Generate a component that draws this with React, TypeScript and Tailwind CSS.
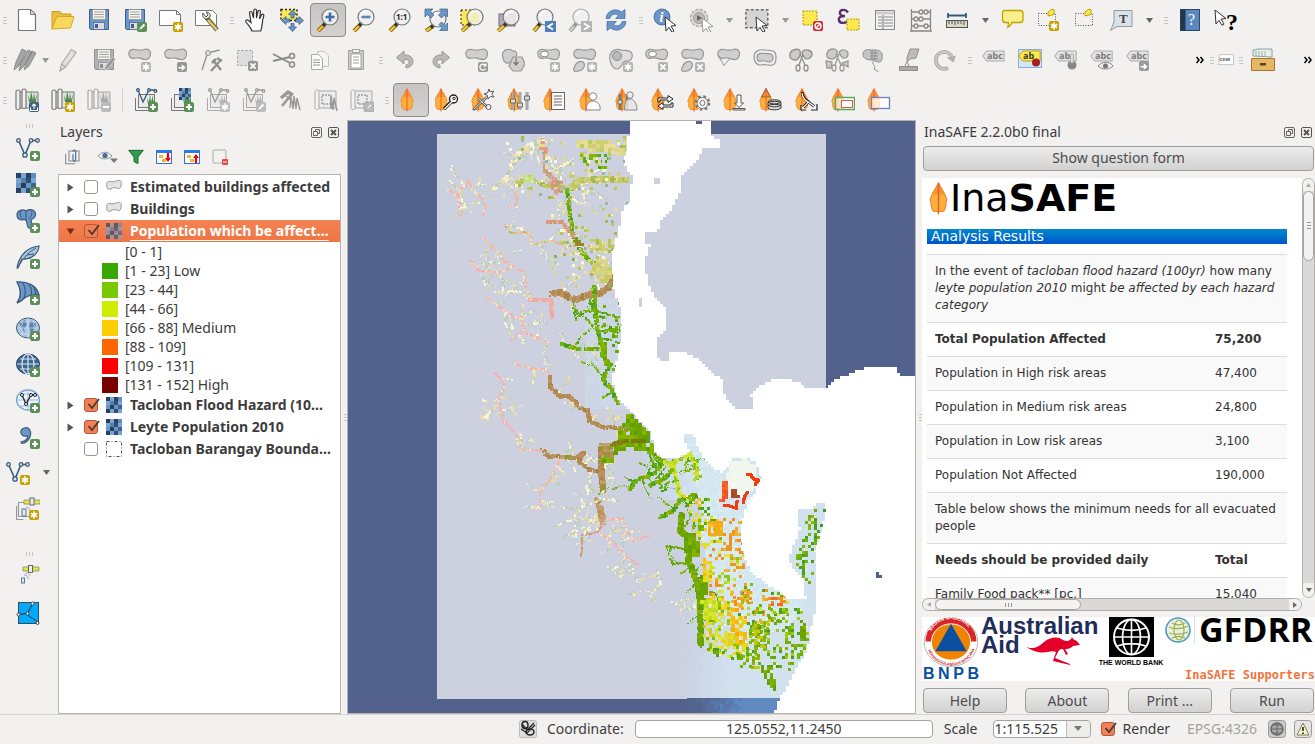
import React from "react";

/* ------------------------------------------------------------------ */
/* Icon building blocks (24 x 24 grid)                                 */
/* ------------------------------------------------------------------ */

type Node = React.ReactNode;

function Svg({ children, size = 24 }: { children: Node; size?: number }) {
  return (
    <svg viewBox="0 0 24 24" width={size} height={size} fill="none" aria-hidden="true" className="block shrink-0">
      {children}
    </svg>
  );
}

const GREEN = "#5a9058";
const GOLD = "#c4a000";
const GREY = "#b2b2b2";
const BLUE = "#6b96c8";
const NAVY = "#3d5a78";

function Badge({ kind, color, x = 14, y = 14 }: { kind: string; color: string; x?: number; y?: number }) {
  return (
    <g transform={`translate(${x} ${y})`}>
      <rect x="0" y="0" width="10" height="10" rx="2" fill={color} />
      {kind === "plus" && <path d="M5 2v6M2 5h6" stroke="#fff" strokeWidth="2.2" />}
      {kind === "minus" && <path d="M2 5h6" stroke="#fff" strokeWidth="2" />}
      {kind === "x" && <path d="M2.4 2.4l5.2 5.2M7.6 2.4L2.4 7.6" stroke="#fff" strokeWidth="1.8" />}
      {kind === "star" && <path d="M5 1.3v7.4M1.8 3.2l6.4 3.6M1.8 6.8l6.4-3.6" stroke="#fff" strokeWidth="1.6" />}
      {kind === "pen" && <path d="M2.2 7.8l1-2.4 3.6-3.6 1.4 1.4-3.6 3.6z" fill="#fff" />}
      {kind === "arrow" && <path d="M1.5 5h3.2V2.2L8.6 5.6 4.7 9V6.6H1.5z" fill="#fff" />}
      {kind === "up" && <path d="M5 7V2M3 4l2-2 2 2M1.5 5.5v3h7v-3" stroke="#fff" strokeWidth="1.1" />}
      {kind === "rot" && <path d="M7.6 6.5A3 3 0 1 1 7.4 3.4M7.8 1.6v2.3H5.4" stroke="#fff" strokeWidth="1.3" />}
      {kind === "no" && (
        <g>
          <circle cx="5" cy="5" r="3" stroke="#fff" strokeWidth="1.4" />
          <path d="M3 7l4-4" stroke="#fff" strokeWidth="1.4" />
        </g>
      )}
    </g>
  );
}

function Floppy({ fill = BLUE, edge = "#3c5f8e", paper = "#f5f5f3" }: { fill?: string; edge?: string; paper?: string }) {
  return (
    <g>
      <path d="M2.5 1.5h19v20h-18l-1-1z" fill={fill} stroke={edge} />
      <rect x="5.5" y="1.5" width="13" height="10" rx="1" fill={paper} stroke="#8a8a8a" strokeWidth=".7" />
      <path d="M7 4h10M7 6.5h10M7 9h10" stroke="#a09f90" />
      <rect x="6.5" y="14.5" width="11" height="7" fill="#dcdcdc" stroke={edge} strokeWidth=".7" />
      <rect x="8" y="16" width="3" height="4" fill={edge} />
    </g>
  );
}

function Lens({ muted = false, cx = 14, cy = 9 }: { muted?: boolean; cx?: number; cy?: number }) {
  return (
    <g>
      <path d={`M2 23L${cx - 5} ${cy + 7}`} stroke={muted ? "#999" : "#7b5b10"} strokeWidth="4" />
      <path d={`M2 23L${cx - 5} ${cy + 7}`} stroke={muted ? "#ccc" : "#f5c62c"} strokeWidth="2.4" />
      <path d={`M${cx - 7} ${cy + 9}l3-4`} stroke={muted ? "#999" : "#333"} strokeWidth="3" />
      <circle cx={cx} cy={cy} r="8" fill="#eef0ee" fillOpacity=".85" stroke={muted ? "#aaa" : "#777"} strokeWidth="1.2" />
      <path d={`M${cx - 5} ${cy - 1}a5.5 5.5 0 0 1 5-4.5`} stroke="#fff" strokeWidth="1.5" />
    </g>
  );
}

function Blob({ d = "M.8 6C.5 2 4 .8 7 1.500s6 1 9 0 6.500 0 6.500 4-2 6.500-5.500 6-5.500-2.500-9-1.500S1 10 .8 6z", fill = "#cfcfcf", edge = "#979797" }) {
  return <path d={d} fill={fill} stroke={edge} strokeWidth="1.2" />;
}

function Nodes({ edge = NAVY }: { edge?: string }) {
  return (
    <g stroke={edge} strokeWidth="1.3" fill="#dfe8f2">
      <path d="M2.5 3.5L9 18M9 18L15 3.5h6" fill="none" strokeWidth="1.6" />
      <circle cx="2.5" cy="3.5" r="1.8" />
      <circle cx="15" cy="3.5" r="1.8" />
      <circle cx="21.5" cy="3.5" r="1.8" />
      <circle cx="9" cy="18" r="2.2" />
    </g>
  );
}

const CHECKER = ["#24415f", "#7ba4d1", "#24415f", "#5f8dc0", "#7ba4d1", "#5580b0", "#30507a", "#7ba4d1", "#6a96c6", "#24415f", "#6a96c6", "#3d6391", "#24415f", "#7ba4d1", "#30507a", "#7ba4d1"];

function Checker({ x = 0, y = 0, s = 5 }: { x?: number; y?: number; s?: number }) {
  return (
    <g shapeRendering="crispEdges">
      {CHECKER.map((f, i) => (
        <rect key={i} x={x + (i % 4) * s} y={y + Math.floor(i / 4) * s} width={s} height={s} fill={f} />
      ))}
    </g>
  );
}

function GrassMap({ muted = false }: { muted?: boolean }) {
  const g = muted ? "#a5a5a5" : "#4c8a4a";
  return (
    <g>
      <path d="M5 4h18v16H5" fill="#e4e4e4" stroke={muted ? "#aaa" : "#777"} />
      <path d="M1 3.5c0-2 4-2 4 0V20c0 2-4 2-4 0zM7 2.5c0-2 4-2 4 0V19c0 2-4 2-4 0z" fill="#f2f2f2" stroke={muted ? "#aaa" : "#777"} strokeWidth="1.2" />
      <path d="M14 14l-1-7 2 5 1-9 2 9 1-8 1 8 2-6-1 8z" fill={g} />
    </g>
  );
}

function LayerFrame({ muted = false }: { muted?: boolean }) {
  const c = muted ? "#aaa" : "#777";
  return (
    <g>
      <path d="M1.5 10v12.5H15" stroke={c} />
      <rect x="4.5" y="6.5" width="16" height="13" fill="#ececec" stroke={c} />
      <path d="M14 16l-1-6 2 4 1-8 1 8 2-7v7l2-5-1 7z" fill={muted ? "#aaa" : "#4c8a4a"} />
    </g>
  );
}

function VLine({ muted = false }: { muted?: boolean }) {
  const c = muted ? "#999" : "#355a7c";
  return (
    <g stroke={c} strokeWidth="1.3" fill="#e8eef4">
      <path d="M4 2l5 12 6-12h6" fill="none" />
      <circle cx="4" cy="2" r="1.3" />
      <circle cx="15" cy="2" r="1.3" />
      <circle cx="21.5" cy="3" r="1.3" />
    </g>
  );
}

function Leaf({ x = 0 }: { x?: number }) {
  return (
    <g transform={`translate(${x} 0)`}>
      <path d="M7 .5C5.5 4 1.500 9 .8 13c.6 1.5 1 2 .6 3.5C2 20 2.500 21 4 21.5h6c1.5-.5 2-1.5 2.600-5-.4-1.5 0-2 .6-3.5C12.500 9 8.5 4 7 .5z" fill="#fbaf3c" stroke="#f0842c" strokeWidth=".8" />
      <path d="M7 .5C6 3 4 6 2.500 9h9C10 6 8 3 7 .5z" fill="#f58233" opacity=".6" />
      <path d="M7 1v22.5" stroke="#ee5b22" strokeWidth="1" />
    </g>
  );
}

function Cursor({ x = 12, y = 8, edge = "#333" }: { x?: number; y?: number; edge?: string }) {
  return <path transform={`translate(${x} ${y})`} d="M0 0l11 8.5-5 .6 3 5-2 1.2-3-5L1 14z" fill="#fff" stroke={edge} />;
}

const label = (t: string, x: number, y: number, size: number, fill: string) => (
  <text x={x} y={y} fontSize={size} fontWeight="700" fill={fill} fontFamily='"Open Sans", sans-serif'>
    {t}
  </text>
);

function Tag({ t, fill = "#e2e2e2", edge = "#aaa", ink = "#777" }: { t: string; fill?: string; edge?: string; ink?: string }) {
  return (
    <g>
      <path d="M.8 8L4.5 3h17.7v10H4.5z" fill={fill} stroke={edge} />
      {label(t, 5, 11, 9, ink)}
    </g>
  );
}

const I: Record<string, Node> = {
  newDoc: (
    <g>
      <path d="M3.5 1.5h12l5 5v16h-17z" fill="#fff" stroke="#777" strokeWidth="1.2" />
      <path d="M15.5 1.5v5h5z" fill="#ddd" stroke="#777" />
    </g>
  ),
  open: (
    <g>
      <path d="M1 21V3.5h8l2 2.5h9v3" fill="#e8bd3c" stroke="#c99c1b" />
      <path d="M1 21L6 8.5h17L19.5 20z" fill="#fbd85c" stroke="#d0a92c" />
    </g>
  ),
  save: <Floppy />,
  saveAs: (
    <g>
      <Floppy />
      <Badge kind="pen" color={GREEN} />
    </g>
  ),
  composer: (
    <g>
      <path d="M.5 2.5h17l4 4v11H.5z" fill="#fff" stroke="#777" />
      <path d="M17.5 2.5v4h4" stroke="#777" />
      <Badge kind="star" color={GOLD} />
    </g>
  ),
  composerMgr: (
    <g>
      <path d="M.5 2.5h17l4 4v11H.5z" fill="#fff" stroke="#777" />
      <path d="M11 9l11 13" stroke="#6b6330" strokeWidth="4.5" />
      <path d="M13 12l9 10" stroke="#dcc87c" strokeWidth="2.6" />
      <path d="M8 5c-1 3 0 6 4 6l3-2c1-3-1-5-4-5l2 3-2 2z" fill="#e8e8e8" stroke="#555" />
    </g>
  ),
  hand: (
    <path
      d="M8 23c-1-4-4-6-6-9-1-1.500 1-3 2.500-1.500l2.500 2L5.500 5c0-2 2.200-2 2.700 0L9.500 10 9.800 2.500c0-2 2.600-2 2.700 0V10l1.500-6.500c.5-1.600 2.600-1.200 2.500.5L15.500 11l2-4c1-1.500 2.700-.5 2.200 1-2 6-1 10-3 15z"
      fill="#fff"
      stroke="#333"
      strokeWidth="1.2"
    />
  ),
  panSel: (
    <g>
      <rect x="1" y="1.500" width="16" height="11" fill="#fce94f" stroke="#222" strokeWidth="1.500" strokeDasharray="2 2" />
      <path d="M12.500 2l4 4.500h-2.500V10h-3V6.500H8.500zM12.500 23.500l-4-4.500H11v-3.500h3V19h2.500zM1.500 12.500L6 8.500V11h3.500v3H6v2.500zM23.500 12.500L19 8.500V11h-3.500v3H19v2.500z" fill={BLUE} stroke="#3a5f8c" strokeWidth=".8" />
    </g>
  ),
  zoomIn: (
    <g>
      <Lens />
      <path d="M14 4.500v9M9.500 9h9" stroke="#3f6da5" strokeWidth="2.600" />
    </g>
  ),
  zoomOut: (
    <g>
      <Lens />
      <path d="M9.500 9h9" stroke="#5c87bd" strokeWidth="2.600" />
    </g>
  ),
  zoom11: (
    <g>
      <Lens />
      {label("1:1", 8, 12, 8, "#222")}
    </g>
  ),
  zoomFull: (
    <g>
      <Lens cx={14} cy={11} />
      <path d="M1 1h8L6.500 3.500 10 7 7 10 3.500 6.500 1 9zM23.500 1h-8L18 3.500 14.500 7l3 3L21 6.500 23.500 9zM23.500 22.500h-8L18 20l-3-3.500 2.500-2.500 3.500 3.500 2.500-2.500z" fill={BLUE} stroke="#3a5f8c" strokeWidth=".7" />
    </g>
  ),
  zoomSel: (
    <g>
      <rect x="1" y="2" width="14" height="15" fill="#fce94f" stroke="#222" strokeDasharray="2 2" />
      <Lens cx={15} />
      <path d="M10 5h9v9h-9z" fill="#f4efaa" opacity=".8" />
    </g>
  ),
  zoomLayer: (
    <g>
      <rect x="3" y="6" width="16" height="12" fill="#b9a9c0" stroke="#77667f" />
      <Lens cx={15} />
    </g>
  ),
  zoomLast: (
    <g>
      <Lens cx={13} />
      <rect x="13" y="13" width="11" height="11" fill="#4e80b8" />
      <path d="M21 15.500l-5 3 5 3" stroke="#fff" strokeWidth="1.800" />
    </g>
  ),
  zoomNext: (
    <g>
      <Lens cx={13} muted />
      <rect x="13" y="13" width="11" height="11" fill="#b5b5b5" />
      <path d="M16 15.500l5 3-5 3" stroke="#fff" strokeWidth="1.800" />
    </g>
  ),
  refresh: (
    <g fill={BLUE} stroke="#42699b" strokeWidth=".7">
      <path d="M2 10.500C2.500 3 11-1 17.500 4L21 1.500v9h-9.500l3-3C11 5 6.500 6.500 6 10.500z" />
      <path d="M22 13.500c-.5 7.500-9 11.500-15.500 6.500L3 22.500v-9h9.500l-3 3c3.500 2.500 8 1 8.500-3z" />
    </g>
  ),
  info: (
    <g>
      <circle cx="9" cy="9" r="8" fill={BLUE} stroke="#49719f" />
      <text x="6.500" y="14" fontSize="14" fontWeight="700" fontStyle="italic" fill="#fff" fontFamily='"Liberation Serif", serif'>i</text>
      <Cursor x={12} y={9} />
    </g>
  ),
  action: (
    <g>
      <circle cx="10" cy="10" r="8.500" fill="#ddd" stroke="#aaa" strokeWidth="1.500" strokeDasharray="3 1.500" />
      <circle cx="10" cy="10" r="5.500" fill="#bbb" stroke="#999" />
      <path d="M8 7l5 3-5 3z" fill="#666" />
      <Cursor x={13} y={10} edge="#999" />
    </g>
  ),
  select: (
    <g>
      <rect x=".8" y="1.800" width="22" height="18" fill="#d4d4d4" stroke="#666" strokeWidth="1.400" strokeDasharray="3 2" />
      <Cursor x={11} y={9} />
    </g>
  ),
  deselect: (
    <g>
      <rect x="2" y="3" width="14" height="14" fill="#fce94f" stroke="#b39b00" strokeDasharray="2 1" />
      <Badge kind="no" color="#d8262c" x={12} y={13} />
    </g>
  ),
  expr: (
    <g>
      <path d="M11 4.500C8 0 2 2 3 5.500 3.500 8 6 8 8 8 4 8 1 9 2 12.500c1.200 3.500 8 3 9.500-.5" stroke="#5c2d74" strokeWidth="2.400" />
      <rect x="10" y="11" width="12" height="11" fill="#fce94f" stroke="#c4a000" strokeDasharray="2 1" />
    </g>
  ),
  attr: (
    <g stroke="#888">
      <rect x="2.500" y="2.500" width="19" height="19" fill="#f4f4f4" />
      <path d="M3 5h18" strokeWidth="3" stroke="#ccc" />
      <path d="M5 9h4M11 9h9M5 12h4M11 12h9M5 15h4M11 15h9M5 18h4M11 18h9M10 7v14" strokeWidth="1.200" />
    </g>
  ),
  abacus: (
    <g stroke="#888" strokeWidth="1.300">
      <path d="M2.500 1v22M21.500 1v22M1 23h22M3 4h18M3 11h18M3 18h18" />
      <g fill="#eee"><circle cx="12" cy="4" r="2" /><circle cx="17" cy="4" r="2" /><circle cx="7" cy="11" r="2" /><circle cx="12" cy="11" r="2" /><circle cx="7" cy="18" r="2" /><circle cx="17" cy="18" r="2" /></g>
    </g>
  ),
  ruler: (
    <g>
      <path d="M3 7.500h18M3 5v5M21 5v5" stroke="#2f5c78" strokeWidth="1.800" />
      <rect x="1.500" y="12.500" width="21" height="7" fill="#d9d9c8" stroke="#555" />
      <path d="M4 13v3M7 13v3M10 13v4M13 13v3M16 13v3M19 13v4" stroke="#555" />
    </g>
  ),
  tip: <path d="M4 2.500h15c2 0 3 1 3 3v6c0 2-1 3-3 3h-8c-1 3-2 4-4.500 5 1-2 1-3 .8-5H4c-2 0-2.500-1-2.500-3v-6c0-2 .5-3 2.500-3z" fill="#f9f08c" stroke="#c4a000" strokeWidth="1.300" />,
  bmNew: (
    <g>
      <rect x="1.500" y="5.500" width="17" height="12" stroke="#555" strokeDasharray="1 1.500" />
      <path d="M11 8V4l3-2.500h3v5z" fill="#fce94f" stroke="#c4a000" />
      <Badge kind="star" color={GOLD} x={12} y={13} />
    </g>
  ),
  bm: (
    <g>
      <rect x="2.500" y="5.500" width="17" height="12" stroke="#555" strokeDasharray="1 1.500" />
      <path d="M12 8V4l3-2.500h3v5z" fill="#fce94f" stroke="#c4a000" />
    </g>
  ),
  textAnn: (
    <g>
      <path d="M5 2.500h18v16H8l-6.500 4L5 14z" fill="#d8e2ec" stroke="#999" />
      <text x="10" y="15" fontSize="13" fontWeight="700" fill="#444" fontFamily='"Liberation Serif", serif'>T</text>
    </g>
  ),
  help: (
    <g>
      <rect x="2.500" y="1.500" width="19" height="21" fill="#5b87bd" stroke="#27496b" />
      <rect x="2.500" y="1.500" width="5" height="21" fill="#22374f" />
      <text x="10" y="17" fontSize="16" fill="#fff" fontFamily='"Liberation Serif", serif'>?</text>
    </g>
  ),
  whats: (
    <g>
      <Cursor x={1} y={2} />
      <text x="12" y="22" fontSize="24" fontWeight="700" fill="#000" fontFamily='"Liberation Serif", serif'>?</text>
    </g>
  ),
  pencils: (
    <g fill="#a5a5a5" stroke="#7d7d7d" strokeWidth=".8">
      <path d="M1 22l2-8L9 1l4 2-7 15zM6 23l2-8 7-13 4 2-8 14zM11 22l2-7 6-12 4 2-7 13z" />
    </g>
  ),
  pencil: <path d="M4 23l1.500-7L15.500 1.500l4.500 3L9.500 19zM5.500 16l4 3" fill="#e2e2e2" stroke="#aaa" strokeWidth="1.200" />,
  saveEdits: (
    <g>
      <Floppy fill="#b2b2b2" edge="#8f8f8f" />
      <path d="M12 23l1.500-5 7-9 3 2-7 9z" fill="#999" stroke="#ddd" strokeWidth=".7" />
    </g>
  ),
  addFeat: (<g><Blob /><Badge kind="star" color={GREY} x={13} /></g>),
  moveFeat: (<g><Blob /><Badge kind="arrow" color="#979797" x={13} /></g>),
  nodeTool: (
    <g stroke="#8f8f8f">
      <path d="M2 22L7.500 5l12-3" strokeWidth="1.300" />
      <circle cx="8" cy="5" r="2.500" fill="#ddd" />
      <path d="M11 23l9-10M13 12l8 10" strokeWidth="2.200" />
      <path d="M17 10l5 3M12 15l4-4" strokeWidth="2.600" />
    </g>
  ),
  delSel: (
    <g>
      <rect x="1.500" y="2.500" width="15" height="15" fill="#ddd" stroke="#999" strokeDasharray="2 2" />
      <Badge kind="x" color="#949494" x={12} y={13} />
    </g>
  ),
  cut: (
    <g stroke="#8c8c8c" strokeWidth="1.800">
      <path d="M1 6l17 9M1 13l17-4" />
      <circle cx="20" cy="8" r="2.500" strokeWidth="1.600" />
      <circle cx="20" cy="16.500" r="2.500" strokeWidth="1.600" />
    </g>
  ),
  copy: (
    <g stroke="#c4c4c4">
      <path d="M9.500 3.500h7l4 4v11h-11z" fill="#f5f5f5" />
      <path d="M3.500 6.500h7l4 4v11h-11z" fill="#fafafa" stroke="#aaa" />
      <path d="M5 12h7M5 14.500h7M5 17h7" stroke="#999" />
    </g>
  ),
  paste: (
    <g stroke="#a2a2a2">
      <rect x="4.500" y="2.500" width="15" height="19" fill="#ccc" />
      <rect x="7" y="6" width="10" height="14" fill="#fff" />
      <path d="M9 9h6M9 12h6M9 15h6" />
      <rect x="8.500" y="1.500" width="7" height="3" fill="#eee" />
    </g>
  ),
  undo: <path d="M3.500 9.500L11 3v4c10-1 13 11 2 13v-3c5-1.500 4-6-2-5.500V16z" fill="#b9b9b9" stroke="#969696" />,
  redo: <path d="M20.500 9.500L13 3v4C3 6 0 18 11 20v-3c-5-1.500-4-6 2-5.500V16z" fill="#b9b9b9" stroke="#969696" />,
  rotate: (<g><Blob /><Badge kind="rot" color="#999" x={13} /></g>),
  simplify: (
    <g fill="#cfcfcf" stroke="#979797" strokeWidth="1.200">
      <path d="M1.500 7c0-6 8-7 10-4 3-1 5 2 4 5s-4 6-8 7-6-4-6-8z" />
      <path d="M12 9h9l3 7-4 7h-8l-4-5z" />
      <path d="M15 10v6M12.500 14l2.500 3 2.500-3" fill="none" stroke="#777" />
    </g>
  ),
  ringAdd: (<g><Blob /><ellipse cx="7.500" cy="6" rx="4" ry="2.800" fill="#fff" stroke="#888" /><Badge kind="star" color={GREY} x={13} /></g>),
  partAdd: (<g><Blob /><Blob d="M1 20c1-5 6-8 9-6s1 8-4 9-6 0-5-3z" /><Badge kind="star" color={GREY} x={14} /></g>),
  fillRing: (<g><Blob d="M1 7c2-6 8-6 11-5s10-1 11 4-2 8-7 7c-3 0-3 8-8 8S0 13 1 7z" fill="#dedede" /><circle cx="8" cy="8" r="4.500" fill="#bbb" stroke="#888" /><Badge kind="star" color={GREY} x={14} /></g>),
  ringDel: (<g><Blob /><ellipse cx="7.500" cy="6" rx="4" ry="2.800" fill="#fff" stroke="#888" /><Badge kind="x" color={GREY} x={13} /></g>),
  partDel: (<g><Blob /><Blob d="M1 20c1-5 6-8 9-6s1 8-4 9-6 0-5-3z" /><Badge kind="x" color={GREY} x={14} /></g>),
  reshape: (<g><path d="M2 9l5 8.500 6-7" fill="#eee" stroke="#979797" /><Blob /></g>),
  offset: (<g><Blob d="M1 9c0-6 5-8 11-7s11-1 11 7-3 9-8 8-6 0-8 0-6-2-6-8z" fill="#eee" /><Blob d="M4 9c0-4 4-4 8-3.500s8-.5 8 4-3 5-6 4-4-1-6-.5-4 0-4-4z" /></g>),
  split: (
    <g stroke="#8f8f8f" strokeWidth="1.300">
      <path d="M1 6c1-5 9-6 10-3s-1 9-5 9-6-3-5-6zM14 3c3-2 9-1 9 3s-5 6-7 4-4-5-2-7z" fill="#ccc" />
      <path d="M14 6l-4 11M11 6l5 11" />
      <ellipse cx="9" cy="20" rx="2" ry="3" /><ellipse cx="17" cy="20" rx="2" ry="3" />
    </g>
  ),
  splitParts: (
    <g stroke="#9a9a9a" strokeWidth="1.300">
      <path d="M2 5c2-5 9-5 10-2s-1 8-5 8-6-2-5-6zM15 3c3-2 8-1 8 3s-4 5-6 3-4-4-2-6zM1 13l6 1-1 6H2zM17 15l6-2v6z" fill="#ccc" />
      <path d="M14 6l-4 11M11 6l5 11" />
      <ellipse cx="9" cy="20" rx="2" ry="3" /><ellipse cx="17" cy="20" rx="2" ry="3" />
    </g>
  ),
  merge: (
    <g stroke="#8f8f8f">
      <path d="M2 5c2-5 7-3 9-3s9-1 10 4-1 9-4 8-4-2-6-2-10 0-9-7z" fill="#c4c4c4" />
      <path d="M11 2v10M14 2v10M9 5h8M9 8h8M9 11h8" />
      <path d="M13 13c-4 3 3 4 0 8 2 2 4 1 4 3" />
    </g>
  ),
  glue: (
    <g stroke="#8f8f8f">
      <path d="M13 1h9l-3 9-6 1-3 3 0-4z" fill="#bbb" />
      <path d="M10 14l2 3-2 2-2-2z" fill="#eee" />
      <path d="M2.500 18.500h18v4h-18z" fill="#aaa" />
    </g>
  ),
  rotPoint: (
    <g>
      <path d="M15 20C8 23 2.500 18 3 11S13 1 19 8" stroke="#a4a4a4" strokeWidth="3.600" />
      <path d="M15 20C8 23 2.500 18 3 11S13 1 19 8" stroke="#cacaca" strokeWidth="1.800" />
      <path d="M13.500 9.500l9.500-2-2.500 7z" fill="#b0b0b0" />
    </g>
  ),
  lab: <Tag t="abc" />,
  labPin: (
    <g>
      <rect x=".5" y="1.500" width="23" height="18" fill="#d5e5f8" stroke="#86aede" />
      <Tag t="ab" fill="#fce94f" edge="#c4a000" ink="#333" />
      <circle cx="18" cy="14.500" r="4" fill="#a61f24" />
    </g>
  ),
  labHold: (<g><Tag t="ab" /><circle cx="18" cy="17" r="4.500" fill="#888" /><rect x="16.500" y="6" width="3" height="9" rx="1" fill="#ddd" stroke="#999" strokeWidth=".7" /></g>),
  labShow: (<g><Tag t="abc" /><path d="M8 18c4-5 12-5 15 0-4 4-11 4-15 0z" fill="#eee" stroke="#888" /><circle cx="15.500" cy="18" r="2.500" fill="#777" /></g>),
  labMove: (<g><Tag t="abc" /><Badge kind="arrow" color="#999" x={13} y={13} /></g>),
  csw: (<g><path d="M4 5.500h17v12l-4 0H2.500l1-2z" fill="#fff" stroke="#bbb" />{label("csw", 4, 13, 7, "#666")}</g>),
  archive: (
    <g>
      <path d="M2 8V2h3l1-1h15v8z" fill="#e9efe9" stroke="#8aa0a0" />
      <path d="M5 3v6M8 3v6M11 3v6M14 3v6" stroke="#9bb5b5" />
      <path d="M.5 10.500h23v12H.5z" fill="#e6b865" stroke="#a5772b" />
      <rect x="9" y="15" width="6" height="2.500" fill="#5b4218" />
    </g>
  ),
  g1: (<g><GrassMap /><Badge kind="up" color="#3e617f" /></g>),
  g2: (<g><GrassMap /><Badge kind="star" color={GOLD} /></g>),
  g3: (<g><GrassMap muted /><Badge kind="minus" color="#bbb" /></g>),
  g4: (<g><LayerFrame /><VLine /><Badge kind="plus" color={GREEN} /></g>),
  g5: (<g><LayerFrame /><Checker x={9} y={0} s={3} /><path d="M14 15l2-9 1 8 2-7v7l2-5-1 7z" fill="#4c8a4a" /><Badge kind="plus" color={GREEN} /></g>),
  g6: (<g><LayerFrame muted /><VLine muted /><Badge kind="star" color="#bbb" /></g>),
  g7: (<g><LayerFrame muted /><VLine muted /><Badge kind="pen" color="#bbb" /></g>),
  g8: (
    <g stroke="#999">
      <path d="M4 18L13 7" strokeWidth="2.600" />
      <path d="M3 10l7-6 5 3" strokeWidth="3.400" />
      <path d="M12 20l1-11 2 12 1-13 2 13 1-11 3 12M8 8l7 6" strokeWidth="1.400" />
    </g>
  ),
  g9: (<g stroke="#aaa"><path d="M3 3h19v17H5z" fill="#ececec" /><path d="M1 3.500c0-2 4-2 4 0V20c0 2-4 2-4 0z" fill="#f2f2f2" /><rect x="8" y="7" width="9" height="9" strokeDasharray="2 1" stroke="#777" /><path d="M17 21l0-13 2 14 1-12 3 13" stroke="#999" strokeWidth="1.500" /></g>),
  g10: (<g stroke="#aaa"><path d="M3 3h19v17H5z" fill="#ececec" /><path d="M1 3.500c0-2 4-2 4 0V20c0 2-4 2-4 0z" fill="#f2f2f2" /><rect x="8" y="7" width="9" height="9" strokeDasharray="2 1" stroke="#777" /><Badge kind="pen" color="#bbb" /></g>),
  i0: <Leaf x={1} />,
  i1: (<g><Leaf x={-1} /><path d="M9 21l8-8" stroke="#222" strokeWidth="3.400" /><circle cx="18.500" cy="11" r="4" fill="#fff" stroke="#222" strokeWidth="1.400" /><path d="M9.500 21l8-8" stroke="#fff" strokeWidth="1.200" /><circle cx="19" cy="10.500" r="1.200" stroke="#222" /></g>),
  i2: (<g><Leaf x={0} /><path d="M18 1l1 3 3.500-1-1.500 3.500 2 2.500-3.500-.5L17 11l-.5-3.500L13 6l3.500-1z" fill="#fff" stroke="#555" /><path d="M2 22L16 9M7 10l9 9" stroke="#666" strokeWidth="2.600" /><path d="M3 21L16 9M7 10l9 9" stroke="#ddd" /><circle cx="17.500" cy="19" r="2.500" fill="#fff" stroke="#555" /></g>),
  i3: (<g><Leaf x={0} /><path d="M6 4v18M13 4v18M20 4v18" stroke="#666" strokeWidth="2.600" /><path d="M6 4v18M13 4v18M20 4v18" stroke="#eee" /><path d="M3.500 11h5v4h-5zM10.500 15h5v4h-5zM17.500 8h5v4h-5z" fill="#ddd" stroke="#666" /></g>),
  i4: (<g><Leaf x={0} /><rect x="8.500" y="4.500" width="13" height="17" fill="#fff" fillOpacity=".85" stroke="#666" /><path d="M11 8h8M11 11h8M11 14h8M11 17h8" stroke="#666" strokeWidth="1.200" /></g>),
  i5: (<g><Leaf x={0} /><circle cx="14" cy="8.500" r="3.700" fill="#fff" stroke="#888" /><path d="M7.500 22c-1-6 3-9 6.500-9s8 3 7 9z" fill="#fff" fillOpacity=".92" stroke="#888" /></g>),
  i6: (<g><Leaf x={0} /><path d="M5 6v16M12 6v16" stroke="#777" strokeWidth="2.500" /><path d="M3 12h4v4H3z" fill="#ddd" stroke="#666" /><circle cx="15" cy="7" r="3.200" fill="#eee" stroke="#888" /><path d="M9.500 22c0-9 2-11 5.500-11s7 4 7 11z" fill="#e5e5e5" fillOpacity=".85" stroke="#888" /></g>),
  i7: (<g><Leaf x={0} /><path d="M7 14v-4h10V7.500L22 11l-5 3.500V12H9v2zM22 15v4H12v2.500L7 18l5-3.500V17h8v-2z" fill="#fff" stroke="#222" /></g>),
  i8: (<g><Leaf x={0} /><circle cx="15.500" cy="15" r="6.500" fill="#f4f4f4" stroke="#777" strokeWidth="2.600" strokeDasharray="2.600 2.500" /><circle cx="15.500" cy="15" r="5.500" fill="#f4f4f4" stroke="#777" /><circle cx="15.500" cy="15" r="2.500" stroke="#777" fill="#fff" /></g>),
  i9: (<g><Leaf x={0} /><path d="M14 7h4v8h2.500L16 19.500 11.500 15H14zM10 20.500h12v1.500H10z" fill="#fff" stroke="#555" /></g>),
  i10: (<g fill="#ddd" stroke="#333"><Leaf x={0} /><path d="M9 20c3 2.500 10 2.500 13 0v-2.500c-3-1.500-10-1.500-13 0zM9 17c3 2.500 10 2.500 13 0v-2.500c-3-1.500-10-1.500-13 0zM9 14c3 2.500 10 2.500 13 0-1-3-12-3-13 0z" /></g>),
  i11: (<g><Leaf x={0} /><path d="M7 4c1 8 6 9 13 15M13 12c0 4-3 6-6 8" stroke="#222" strokeWidth="2.800" /><path d="M7 5c1 8 6 8 13 14M13 13c0 3-3 5-6 7" stroke="#fff" strokeWidth="1.200" /><path d="M22 16v6h-6M6 17v5h5" stroke="#222" fill="#fff" strokeWidth="1.200" /></g>),
  i12: (<g><Leaf x={0} /><rect x="4.500" y="9.500" width="19" height="12" fill="#fff" fillOpacity=".7" stroke="#5aa85a" strokeWidth="1.500" /><rect x="10.500" y="12.500" width="11" height="7" fill="#fff" stroke="#e05a4a" /></g>),
  i13: (<g><Leaf x={0} /><rect x="4.500" y="9.500" width="18" height="11" fill="#fff" fillOpacity=".75" stroke="#6f7fd0" strokeWidth="1.300" /></g>),
  vNodes: (<g><Nodes /><Badge kind="plus" color={GREEN} x={14} y={14} /></g>),
  vRaster: (<g><Checker /><Badge kind="plus" color={GREEN} x={14} y={14} /></g>),
  vPg: (<g><path d="M1 6c0-5 6-6 9-4 4-3 10-1 9.500 4-.5 3-2 4-4.500 4.500l1 6.500c-1 3-4 3-4.500 0L10.500 12 9 10.500C3 12 1 9 1 6z" fill={BLUE} stroke={NAVY} strokeWidth="1.200" /><path d="M5 2c-2 4 0 8 3 8.500M10 2v9M15.500 2.500c1 3-1 6-3 7.500" stroke={NAVY} /><Badge kind="plus" color={GREEN} x={14} y={14} /></g>),
  vLite: (<g><path d="M1 23C3 10 12 2 23 1c0 4-3 11-13 13L6 14 2 23z" fill="#a9c3e2" stroke={NAVY} strokeWidth="1.200" /><path d="M2 22C8 12 14 6 20 3M8 14l7-1M11 10l7-1" stroke={NAVY} /><Badge kind="plus" color={GREEN} x={14} y={14} /></g>),
  vSpatial: (<g><path d="M1 1c9-1 20 3 22 13-5-1-12 0-18 6l-4 2C6 15 5 8 1 1z" fill={BLUE} stroke={NAVY} strokeWidth="1.400" /><path d="M7 2c3 6 3 10 1 15M13 4c3 4 3 8 2 11M18 7c2 3 2 5 2 7" stroke={NAVY} strokeWidth="1.200" /><Badge kind="plus" color={GREEN} x={14} y={14} /></g>),
  vWms: (<g><ellipse cx="12" cy="11" rx="11.500" ry="10" fill="#a9c4e4" stroke={NAVY} /><path d="M3 6l6-3 2 4-3 5 1 4-3-4zM14 4l6 2-1 6-3 5-3-6z" fill="#5f83ad" /><path d="M1 11h22M12 1v20M4 5h16M4 17h16M6 3v16M18 3v16" stroke="#d5e3f3" strokeWidth=".7" /><Badge kind="plus" color={GREEN} x={14} y={14} /></g>),
  vWcs: (<g><ellipse cx="12" cy="11" rx="11.500" ry="10" fill="#3c6590" stroke="#24415f" /><path d="M4 6h16M1 11h22M4 16h16M12 1v20" stroke="#dde8f5" strokeWidth="1.200" /><ellipse cx="12" cy="11" rx="6" ry="10" stroke="#dde8f5" strokeWidth="1.200" /><Badge kind="plus" color={GREEN} x={14} y={14} /></g>),
  vWfs: (<g><ellipse cx="12" cy="11" rx="11.500" ry="10" fill="#eef4fb" stroke="#7ba4d1" strokeWidth="1.400" /><path d="M1 11h22M12 1v20M3 5h18M3 17h18" stroke="#9bbbe0" /><path d="M6 6l4 9 5-9h4" stroke="#222" strokeWidth="1.300" /><g fill="#fff" stroke="#222"><circle cx="6" cy="6" r="1.500" /><circle cx="10" cy="15" r="1.500" /><circle cx="15" cy="6" r="1.500" /><circle cx="19" cy="6" r="1.500" /></g><Badge kind="plus" color={GREEN} x={14} y={14} /></g>),
  vComma: (<g><path d="M5 17c5-1.500 7-4 6.500-6C8 12 4 9.500 5 6s7-5 9-.5S13 17 6 18.500z" fill={BLUE} stroke={NAVY} strokeWidth="1.200" /><Badge kind="plus" color={GREEN} x={14} y={14} /></g>),
  vNew: (<g><Nodes /><Badge kind="star" color={GOLD} x={14} y={14} /></g>),
  vGps: (<g><path d="M.5 9v13.500h7M2.500 5.500h6M2.500 5.500v14h11" stroke="#999" strokeWidth="1.200" /><path d="M8 3h16v4H8z" fill="#e6e62a" stroke="#999" /><rect x="14" y="1" width="4" height="7" fill="#eee" stroke="#666" /><rect x="6" y="12" width="4" height="7" fill="#dfe8ee" stroke="#557d99" /><path d="M10 10c3 0 4 2 4 4" stroke="#aaa" /><Badge kind="star" color={GOLD} x={13} y={13} /></g>),
  vSat: (<g><path d="M7 4h16v4H7z" fill="#e6e62a" stroke="#999" /><rect x="12.500" y="2.500" width="4" height="7" fill="#eee" stroke="#666" /><rect x="5.500" y="15" width="3" height="5" fill="#dfe8ee" stroke="#557d99" /><path d="M8 12c3 0 4 1 4 4M9 10c4 0 5 2 5 3" stroke="#aaa" /></g>),
  vTopo: (<g><rect x="2.500" y="1.500" width="20" height="21" fill="#00aaff" stroke="#3b4a55" /><path d="M2.500 13.500l9-1 5-10M11.500 12.500c2 5 8 5 10 9" stroke="#222" /><g fill="#fff" stroke="#444"><circle cx="2.500" cy="13.500" r="1.500" /><circle cx="11.500" cy="12.500" r="1.500" /><circle cx="16.500" cy="2.500" r="1.500" /><circle cx="21.500" cy="22" r="1.500" /></g></g>),
};

/* ------------------------------------------------------------------ */
/* Toolbars                                                            */
/* ------------------------------------------------------------------ */

function Tool({ name, pressed = false, narrow = false }: { name: string; pressed?: boolean; narrow?: boolean }) {
  return (
    <button
      type="button"
      aria-label={name}
      aria-pressed={pressed}
      className={
        "flex h-[34px] shrink-0 items-center justify-center rounded-sm " +
        (narrow ? "w-8 " : "w-9 ") +
        (pressed ? "border border-[#8b8b8b] bg-gradient-to-b from-[#c6c5c4] to-[#d3d2d1]" : "")
      }
    >
      <Svg>{I[name]}</Svg>
    </button>
  );
}

function Grip({ wide = false }: { wide?: boolean }) {
  return (
    <div className={"flex shrink-0 flex-col items-center gap-[2px] " + (wide ? "w-[13px]" : "w-[9px]")}>
      <i className="h-px w-1 bg-[#c4c3c1]" />
      <i className="h-px w-1 bg-[#c4c3c1]" />
      <i className="h-px w-1 bg-[#c4c3c1]" />
    </div>
  );
}

function VGrip() {
  return (
    <div className="flex justify-center gap-[2px]">
      <i className="h-1 w-px bg-[#c4c3c1]" />
      <i className="h-1 w-px bg-[#c4c3c1]" />
      <i className="h-1 w-px bg-[#c4c3c1]" />
    </div>
  );
}

function Drop({ narrow = false, dark = false }: { narrow?: boolean; dark?: boolean }) {
  return (
    <button type="button" aria-label="Options" className={"flex h-8 shrink-0 items-center justify-center " + (narrow ? "w-[9px]" : "w-5")}>
      <svg width="7" height="5" viewBox="0 0 7 5" aria-hidden="true">
        <path d="M0 0h7L3.500 5z" fill={dark ? "#666" : "#999"} />
      </svg>
    </button>
  );
}

function More() {
  return (
    <button type="button" className="flex w-[14px] shrink-0 items-center justify-center" aria-label="More tools">
      <svg width="8" height="8" viewBox="0 0 8 8" fill="none" aria-hidden="true">
        <path d="M.5 1L3 4 .5 7M4.500 1L7 4 4.500 7" stroke="#000" strokeWidth="1.500" />
      </svg>
    </button>
  );
}

const tools = (names: string[]) => names.map((n) => <Tool key={n} name={n} />);

function Toolbars() {
  return (
    <header className="shrink-0">
      <div className="flex h-10 items-center">
        <Grip />
        {tools(["newDoc", "open", "save", "saveAs", "composer", "composerMgr"])}
        <Grip wide />
        {tools(["hand", "panSel"])}
        <Tool name="zoomIn" pressed />
        {tools(["zoomOut", "zoom11", "zoomFull", "zoomSel", "zoomLayer", "zoomLast", "zoomNext", "refresh"])}
        <Grip wide />
        {tools(["info", "action"])}
        <Drop />
        <Tool name="select" />
        <Drop />
        {tools(["deselect", "expr", "attr", "abacus", "ruler"])}
        <Drop dark />
        {tools(["tip", "bmNew", "bm", "textAnn"])}
        <Drop dark />
        <Grip wide />
        {tools(["help", "whats"])}
      </div>
      <div className="flex h-10 items-center">
        <Grip />
        <Tool name="pencils" narrow />
        <Drop narrow />
        {tools(["pencil", "saveEdits", "addFeat", "moveFeat", "nodeTool", "delSel", "cut", "copy", "paste"])}
        <Grip wide />
        {tools(["undo", "redo", "rotate", "simplify", "ringAdd", "partAdd", "fillRing", "ringDel", "partDel", "reshape", "offset", "split", "splitParts", "merge", "glue", "rotPoint"])}
        <Grip wide />
        {tools(["lab", "labPin", "labHold", "labShow", "labMove"])}
        <div className="flex-1" />
        <More />
        <Grip />
        <button type="button" aria-label="Catalogue search" className="flex w-5 items-center justify-center">
          <Svg size={20}>{I.csw}</Svg>
        </button>
        <Grip />
        <Tool name="archive" />
        <div className="w-5" />
        <More />
      </div>
      <div className="flex h-10 items-center">
        <Grip />
        {tools(["g1", "g2", "g3"])}
        <div className="flex w-[11px] justify-center">
          <i className="h-6 w-px bg-[#d4d3d1]" />
        </div>
        {tools(["g4", "g5", "g6", "g7", "g8", "g9", "g10"])}
        <Grip wide />
        <Tool name="i0" pressed />
        {tools(["i1", "i2", "i3", "i4", "i5", "i6", "i7", "i8", "i9", "i10", "i11", "i12", "i13"])}
      </div>
    </header>
  );
}

function SideBar() {
  return (
    <nav aria-label="Layer tools" className="flex w-[58px] shrink-0 flex-col pt-1">
      <VGrip />
      <div className="flex flex-col gap-[2px] pl-[10px] pt-1">
        {tools(["vNodes", "vRaster", "vPg", "vLite", "vSpatial", "vWms", "vWcs", "vWfs", "vComma"])}
      </div>
      <div className="flex pt-[2px]">
        <Tool name="vNew" />
        <Drop dark />
      </div>
      <div className="pl-[10px] pt-[2px]">
        <Tool name="vGps" />
      </div>
      <div className="pt-[26px]">
        <VGrip />
      </div>
      <div className="flex flex-col gap-1 pl-[10px] pt-[2px]">
        <Tool name="vSat" />
        <Tool name="vTopo" />
      </div>
    </nav>
  );
}

/* ------------------------------------------------------------------ */
/* Docks                                                               */
/* ------------------------------------------------------------------ */

function DockTitle({ title }: { title: string }) {
  return (
    <div className="flex h-6 items-center justify-between">
      <h2 className="text-sm">{title}</h2>
      <div className="flex gap-[6px]">
        <button type="button" aria-label="Float panel">
          <svg width="11" height="11" viewBox="0 0 11 11" fill="none" stroke="#666" className="block">
            <rect x=".5" y=".5" width="10" height="10" rx="1.500" />
            <path d="M2.500 4.500h4v4h-4zM4.500 4.500v-2h4v4h-2" />
          </svg>
        </button>
        <button type="button" aria-label="Close panel">
          <svg width="11" height="11" viewBox="0 0 11 11" fill="none" stroke="#555" className="block">
            <rect x=".5" y=".5" width="10" height="10" rx="1.500" />
            <path d="M3 3l5 5M8 3L3 8" strokeWidth="1.900" />
          </svg>
        </button>
      </div>
    </div>
  );
}

function Check({ id, checked }: { id: string; checked: boolean }) {
  return (
    <span className="relative block h-[14px] w-[14px] shrink-0">
      <input
        id={id}
        type="checkbox"
        defaultChecked={checked}
        className="peer block h-[14px] w-[14px] appearance-none rounded-[3px] border border-[#9d958e] bg-white checked:border-[#b1583a] checked:bg-[#f37f55]"
      />
      <svg viewBox="0 0 14 14" fill="none" className="pointer-events-none absolute -right-[2px] -top-px hidden h-[14px] w-[14px] peer-checked:block">
        <path d="M2.500 7l3.500 4L13 2" stroke="#4a3a33" strokeWidth="1.800" />
      </svg>
    </span>
  );
}

function Twisty({ open = false, hidden = false }: { open?: boolean; hidden?: boolean }) {
  return (
    <svg width="9" height="9" viewBox="0 0 9 9" className="mr-[9px] shrink-0" aria-hidden="true">
      {!hidden && <path d={open ? "M.5 1.500h8L4.500 7.500z" : "M1.500 .5l6 4-6 4z"} fill={open ? "#7a2f16" : "#555"} />}
    </svg>
  );
}

function LayerIcon({ kind }: { kind: string }) {
  return (
    <svg width="16" height="16" viewBox="0 0 16 16" fill="none" className="mx-2 shrink-0" aria-hidden="true">
      {kind === "poly" && <path d="M.8 7c-.5-4 1-5 3.200-4.500s4 .5 6-.5c3-1.500 5.500-.5 5.300 2s-.3 6-2.800 5.500-4-1.500-6-.5-4 2-4.700 1S1 8.500 .8 7z" fill="#e4e4e4" stroke="#999" />}
      {kind === "raster" && <Checker s={4} />}
      {kind === "rasterSel" && (
        <g>
          <Checker s={4} />
          <rect width="16" height="16" fill="#f07746" fillOpacity=".35" />
        </g>
      )}
      {kind === "dash" && <rect x=".5" y=".5" width="15" height="15" stroke="#555" strokeDasharray="3 2 1 2" />}
    </svg>
  );
}

function LayerRow({ id, name, kind, checked = false, leafless = false, selected = false }: { id: string; name: string; kind: string; checked?: boolean; leafless?: boolean; selected?: boolean }) {
  return (
    <li className={"flex h-[22px] items-center pl-[7px] " + (selected ? "bg-gradient-to-b from-[#f58353] to-[#ee7443] text-white" : "")}>
      <Twisty open={selected} hidden={leafless} />
      <Check id={id} checked={checked} />
      <LayerIcon kind={kind} />
      <label htmlFor={id} className={"whitespace-nowrap text-sm font-bold leading-5 " + (selected ? "underline underline-offset-4" : "")}>
        {name}
      </label>
    </li>
  );
}

const LEGEND = [
  ["bg-white", "[0 - 1]"],
  ["bg-[#38a800]", "[1 - 23] Low"],
  ["bg-[#79c900]", "[23 - 44]"],
  ["bg-[#ceed00]", "[44 - 66]"],
  ["bg-[#ffcc00]", "[66 - 88] Medium"],
  ["bg-[#ff6600]", "[88 - 109]"],
  ["bg-[#ff0000]", "[109 - 131]"],
  ["bg-[#7a0000]", "[131 - 152] High"],
];

function LayersDock() {
  return (
    <section className="flex w-[283px] shrink-0 flex-col text-[#3c3c3c]">
      <div className="px-[2px]">
        <DockTitle title="Layers" />
      </div>
      <div className="flex h-[30px] items-center pl-[7px] pb-[5px]">
        <button type="button" aria-label="Add group" className="w-[33px]">
          <Svg size={16}><path d="M1 7v15h14M6 3h15v15H6z" stroke="#888" strokeWidth="1.600" /><path d="M12 8v8c0 3 4 3 4 0V4c0-3-4-3-4 0" stroke="#456f9d" strokeWidth="1.800" /></Svg>
        </button>
        <button type="button" aria-label="Visibility" className="w-[30px]">
          <svg width="20" height="16" viewBox="0 0 20 16" fill="none" className="block"><path d="M0 7c4-5 10-5 14 0-4 4-10 4-14 0z" fill="#eee" stroke="#999" /><circle cx="7" cy="6.500" r="2.600" fill="#456f9d" /><path d="M12 9.500h8L16 14z" fill="#777" /></svg>
        </button>
        <button type="button" aria-label="Filter" className="w-7">
          <Svg size={16}><path d="M1 2h22l-8 10v10l-6-3v-7z" fill="#2f9e4b" stroke="#1f6c33" strokeWidth="1.500" /></Svg>
        </button>
        <button type="button" aria-label="Expand all" className="w-7">
          <svg width="16" height="14" viewBox="0 0 16 14" fill="none" className="block"><rect x=".5" y=".5" width="15" height="13" fill="#fff" stroke="#3a6fd0" /><path d="M0 1.500h16" stroke="#2a7be8" strokeWidth="3" /><path d="M3 5h4v3H3zM6 9h4v3H6z" fill="#f2b632" /><path d="M12 3v6" stroke="#e00" strokeWidth="2.200" /><path d="M9 8h6l-3 4z" fill="#e00" /></svg>
        </button>
        <button type="button" aria-label="Collapse all" className="w-7">
          <svg width="16" height="14" viewBox="0 0 16 14" fill="none" className="block"><rect x=".5" y=".5" width="15" height="13" fill="#fff" stroke="#3a6fd0" /><path d="M0 1.500h16" stroke="#2a7be8" strokeWidth="3" /><path d="M3 5h4v3H3zM6 9h4v3H6z" fill="#f2b632" /><path d="M12 7v6" stroke="#e00" strokeWidth="2.200" /><path d="M9 8h6l-3-4z" fill="#e00" /></svg>
        </button>
        <button type="button" aria-label="Remove layer" className="w-7">
          <svg width="16" height="16" viewBox="0 0 16 16" fill="none" className="block"><rect x="1" y="1" width="13" height="13" rx="1" stroke="#aaa" /><rect x="10" y="10" width="6" height="6" rx="1" fill="#e8474d" /><path d="M11 13h4" stroke="#fff" /></svg>
        </button>
      </div>
      <ul className="flex-1 border border-[#b6b3b0] bg-white pt-px">
        <LayerRow id="l1" name="Estimated buildings affected" kind="poly" />
        <LayerRow id="l2" name="Buildings" kind="poly" />
        <LayerRow id="l3" name="Population which be affect…" kind="rasterSel" checked selected />
        {LEGEND.map(([bg, t]) => (
          <li key={t} className="flex h-[19px] items-center gap-[7px] pl-[43px] text-sm">
            <i className={"h-4 w-4 " + bg} />
            {t}
          </li>
        ))}
        <LayerRow id="l4" name="Tacloban Flood Hazard (10…" kind="raster" checked />
        <LayerRow id="l5" name="Leyte Population 2010" kind="raster" checked />
        <LayerRow id="l6" name="Tacloban Barangay Bounda…" kind="dash" leafless />
      </ul>
    </section>
  );
}

/* ------------------------------------------------------------------ */
/* Map canvas: layers are rasterised into coloured cells               */
/* ------------------------------------------------------------------ */

type Pt = [number, number];

const SEA: Pt[] = [
  [630, 120], [711, 120], [711, 137], [719, 141], [719, 149], [702, 150], [698, 160], [690, 170], [682, 178], [682, 193], [679, 196],
  [672, 210], [662, 219], [657, 234], [644, 234], [644, 244], [652, 245], [647, 252], [645, 270], [650, 288], [656, 300], [662, 304],
  [665, 310], [665, 330], [656, 342], [656, 353], [660, 361], [670, 361], [670, 354], [685, 354], [700, 360], [710, 372], [722, 380],
  [725, 398], [733, 408], [740, 411], [754, 411], [751, 397], [758, 388], [768, 382], [786, 380], [800, 384], [806, 388], [829, 388],
  [835, 380], [850, 375], [866, 368], [895, 368], [900, 377], [916, 377], [916, 716], [774, 716], [779, 699], [785, 690], [795, 670],
  [805, 655], [811, 635], [812, 620], [817, 610], [817, 545], [822, 530], [826, 505], [818, 503], [810, 509], [797, 509], [797, 518],
  [800, 530], [794, 545], [788, 560], [794, 570], [803, 580], [806, 600], [790, 600], [780, 592], [765, 583], [750, 570], [742, 550],
  [742, 520], [748, 500], [755, 492], [761, 478], [755, 461], [742, 457], [733, 459], [728, 466], [722, 474], [710, 465], [700, 452],
  [693, 434], [685, 434], [685, 443], [690, 452], [680, 457], [665, 459], [657, 455], [653, 443], [650, 432], [641, 422], [630, 411],
  [617, 400], [612, 380], [619, 350], [622, 320], [619, 305], [613, 290], [611, 255], [618, 235], [623, 208], [630, 202], [632, 178],
  [624, 165], [627, 138], [630, 135],
];

const AQUA: Pt[] = [[685, 434], [695, 436], [715, 470], [745, 460], [760, 480], [742, 520], [742, 560], [806, 600], [790, 625], [750, 640], [720, 600], [705, 560], [700, 500]];
const CREAM: Pt[] = [[730, 462], [745, 459], [756, 466], [758, 485], [745, 497], [730, 497], [726, 480]];

const inside = (p: Pt[], x: number, y: number) => {
  let r = false;
  for (let i = 0, j = p.length - 1; i < p.length; j = i++) {
    const [xi, yi] = p[i];
    const [xj, yj] = p[j];
    if (yi > y !== yj > y && x < ((xj - xi) * (y - yi)) / (yj - yi) + xi) r = !r;
  }
  return r;
};

const OX = 348;
const OY = 122;

class Cells {
  w: number;
  h: number;
  s: number;
  d: (string | null)[];
  constructor(s: number) {
    this.s = s;
    this.w = Math.ceil(567 / s);
    this.h = Math.ceil(592 / s);
    this.d = new Array(this.w * this.h).fill(null);
  }
  set(x: number, y: number, c: string, size = 1) {
    const i0 = Math.floor((x - OX) / this.s);
    const j0 = Math.floor((y - OY) / this.s);
    for (let j = j0; j < j0 + size; j++)
      for (let i = i0; i < i0 + size; i++) if (i >= 0 && j >= 0 && i < this.w && j < this.h) this.d[j * this.w + i] = c;
  }
  paths() {
    const out: Record<string, string> = {};
    const s = this.s;
    for (let j = 0; j < this.h; j++)
      for (let i = 0; i < this.w; ) {
        const c = this.d[j * this.w + i];
        let k = i + 1;
        while (k < this.w && this.d[j * this.w + k] === c) k++;
        if (c) out[c] = (out[c] || "") + `M${OX + i * s} ${OY + j * s}h${(k - i) * s}v${s}h${-(k - i) * s}z`;
        i = k;
      }
    return Object.entries(out);
  }
}

let seed = 7;
const rnd = () => {
  seed = (seed * 1664525 + 1013904223) % 4294967296;
  return seed / 4294967296;
};
const pick = (a: string[]) => a[Math.floor(rnd() * a.length)];

const PINK = ["#f7b1ae", "#f7b1ae", "#e9cfa8", "#f6e3bf", "#f7b1ae"];
const CREAMY = ["#f8f6d4", "#f1dca8", "#b8cfbf", "#f8f6d4", "#d9d9a0"];
const BROWN = ["#b58a52", "#bd9060", "#a98545", "#c1a070", "#9c9040"];
const ROSE = ["#d99a84", "#cf9a78", "#e8a99a", "#b9a56a"];
const OLIVE = ["#c6cc68", "#b9c653", "#d3cf7c", "#a8b94e", "#e2d99a"];
const LEAFY = ["#6fb50f", "#4a9f20", "#86b800", "#79a800", "#5cab10"];
const DEEP = ["#6ca400", "#7aae00", "#5fa00a", "#86b400", "#6ca400"];
const LIME = ["#cfe528", "#b4da20", "#e4e830", "#8cc41c"];
const GOLDS = ["#f0d020", "#f8c808", "#e8dc28", "#d8e428", "#f8b810"];
const ORANGE = ["#f4a024", "#f78e18", "#e8962c", "#f0b430"];

type River = { p: Pt[]; w: number; c: string[]; b: number };
const RIVERS: River[] = [
  { p: [[448, 190], [455, 196], [460, 194], [461, 188], [468, 182], [472, 190], [480, 198], [486, 208], [482, 216]], w: 2, c: PINK, b: 0.12 },
  { p: [[460, 192], [458, 205], [461, 218]], w: 2, c: PINK, b: 0.1 },
  { p: [[543, 140], [530, 146], [520, 153], [512, 166], [506, 180], [492, 190]], w: 3, c: CREAMY, b: 0.25 },
  { p: [[542, 140], [545, 155], [545, 172], [554, 180], [560, 187], [556, 194]], w: 3, c: ROSE, b: 0.2 },
  { p: [[550, 160], [552, 170], [562, 180]], w: 2, c: CREAMY, b: 0.2 },
  { p: [[528, 176], [515, 183], [516, 205], [508, 208]], w: 2, c: PINK, b: 0.15 },
  { p: [[517, 184], [530, 178], [545, 187], [558, 187], [572, 190]], w: 3, c: OLIVE, b: 0.3 },
  { p: [[572, 188], [580, 181], [600, 180], [626, 181]], w: 5, c: OLIVE, b: 0.25 },
  { p: [[568, 192], [570, 215], [573, 235], [577, 245], [585, 258], [598, 268], [604, 280]], w: 4, c: [...LEAFY, ...OLIVE, ...OLIVE], b: 0.35 },
  { p: [[505, 226], [510, 233], [528, 233], [531, 245], [550, 241], [565, 246], [605, 247]], w: 2, c: [...PINK, ...OLIVE], b: 0.3 },
  { p: [[548, 223], [562, 223], [575, 238]], w: 3, c: ROSE, b: 0.2 },
  { p: [[470, 262], [478, 271], [500, 273], [512, 268], [523, 272], [525, 285], [530, 300]], w: 2, c: PINK, b: 0.2 },
  { p: [[483, 238], [495, 250], [505, 262], [512, 268]], w: 2, c: PINK, b: 0.25 },
  { p: [[495, 293], [520, 292], [530, 300]], w: 2, c: CREAMY, b: 0.2 },
  { p: [[530, 301], [551, 301], [552, 318]], w: 3, c: ["#f3aca6", "#e8aca0"], b: 0.08 },
  { p: [[552, 295], [560, 293], [575, 301], [588, 296], [600, 294], [609, 288], [613, 278]], w: 5, c: BROWN, b: 0.25 },
  { p: [[594, 288], [596, 320], [598, 333], [602, 345], [602, 356], [610, 366], [603, 380], [612, 392], [618, 404]], w: 3, c: LEAFY, b: 0.3 },
  { p: [[575, 320], [585, 312], [598, 312], [618, 318]], w: 2, c: LEAFY, b: 0.3 },
  { p: [[562, 345], [578, 350], [602, 350]], w: 3, c: [...LEAFY, ...OLIVE], b: 0.4 },
  { p: [[600, 333], [618, 331]], w: 3, c: LEAFY, b: 0.1 },
  { p: [[485, 298], [500, 308], [512, 316], [521, 321], [523, 330], [510, 341]], w: 2, c: PINK, b: 0.25 },
  { p: [[521, 321], [522, 305]], w: 2, c: PINK, b: 0 },
  { p: [[523, 332], [535, 338], [548, 342]], w: 2, c: PINK, b: 0.15 },
  { p: [[515, 364], [530, 369], [545, 370], [550, 378]], w: 2, c: PINK, b: 0.2 },
  { p: [[550, 378], [551, 388], [556, 394], [562, 398], [570, 398], [576, 403], [578, 408], [588, 412], [590, 421], [597, 425], [604, 428], [615, 428], [628, 430]], w: 4, c: BROWN, b: 0.3 },
  { p: [[495, 373], [504, 385], [498, 400], [502, 420], [515, 432], [519, 449], [543, 451]], w: 2, c: PINK, b: 0.28 },
  { p: [[543, 451], [549, 457], [575, 458], [584, 453], [580, 462], [590, 470], [602, 473]], w: 4, c: [...BROWN, "#98a03c"], b: 0.3 },
  { p: [[560, 460], [556, 466], [550, 478], [540, 490], [539, 510]], w: 2, c: PINK, b: 0.4 },
  { p: [[602, 446], [601, 470], [603, 490]], w: 5, c: BROWN, b: 0.3 },
  { p: [[598, 500], [601, 510], [604, 522]], w: 6, c: ["#c49a70", "#bd9060", "#c8a078"], b: 0.3 },
  { p: [[603, 490], [598, 500], [582, 506], [570, 520], [555, 526]], w: 2, c: CREAMY, b: 0.35 },
  { p: [[604, 520], [598, 531], [582, 535], [581, 555]], w: 2, c: ROSE, b: 0.35 },
  { p: [[600, 533], [615, 545], [625, 556], [638, 564]], w: 2, c: PINK, b: 0.2 },
  { p: [[606, 520], [620, 518], [626, 530], [632, 540], [648, 536]], w: 2, c: PINK, b: 0.3 },
  { p: [[608, 566], [620, 576], [632, 569]], w: 2, c: CREAMY, b: 0.3 },
  { p: [[657, 570], [660, 583], [650, 595], [654, 600]], w: 2, c: CREAMY, b: 0.2 },
  { p: [[650, 452], [664, 462], [655, 473], [635, 482], [630, 490]], w: 4, c: LEAFY, b: 0.3 },
  { p: [[664, 462], [674, 466], [680, 495], [690, 500]], w: 4, c: LIME, b: 0.3 },
  { p: [[650, 486], [665, 478], [672, 470]], w: 3, c: LEAFY, b: 0.2 },
  { p: [[670, 466], [690, 454], [697, 466], [698, 480]], w: 4, c: LIME, b: 0.4 },
  { p: [[660, 517], [672, 512], [680, 500], [695, 495]], w: 3, c: LEAFY, b: 0.4 },
  { p: [[666, 546], [685, 548]], w: 2, c: LEAFY, b: 0.2 },
  { p: [[672, 563], [690, 563]], w: 2, c: LEAFY, b: 0.1 },
  { p: [[672, 602], [684, 608], [697, 608]], w: 2, c: CREAMY, b: 0.2 },
  { p: [[682, 515], [680, 530], [690, 540], [688, 560], [697, 580], [700, 600], [701, 645]], w: 5, c: DEEP, b: 0.2 },
];

const PATCHES: { p: Pt[]; c: string[]; n: number; s?: number }[] = [
  { p: [[572, 138], [600, 137], [627, 140], [625, 155], [612, 156], [598, 150], [580, 158]], c: ["#dcd78c", "#e8dc98", "#cdd070", "#b9cf5e"], n: 0.85, s: 4 },
  { p: [[580, 155], [600, 152], [612, 160], [604, 168], [582, 166]], c: LEAFY, n: 0.4 },
  { p: [[500, 137], [627, 137], [628, 205], [612, 290], [560, 260], [540, 200], [515, 190]], c: [...CREAMY, ...OLIVE, "#98b9a0", "#98b9a0"], n: 0.1 },
  { p: [[536, 140], [543, 139], [547, 152], [538, 150]], c: ["#ddb18c", "#d8e48c", "#e79b8b"], n: 0.9 },
  { p: [[522, 176], [532, 172], [534, 182], [524, 184]], c: ["#d4ec9c", "#c4e088"], n: 0.9 },
  { p: [[548, 182], [562, 182], [560, 194], [552, 190]], c: ROSE, n: 0.7 },
  { p: [[590, 240], [612, 240], [611, 250], [590, 250]], c: OLIVE, n: 0.6 },
  { p: [[588, 260], [606, 256], [611, 278], [602, 282], [590, 270]], c: ["#d5cf7c", "#c9cc64", "#d9d688"], n: 0.9, s: 4 },
  { p: [[572, 235], [580, 236], [582, 246], [574, 246]], c: ["#8c8c20", "#74a010", "#9a8030"], n: 0.9 },
  { p: [[545, 255], [605, 250], [610, 290], [560, 290]], c: [...OLIVE, ...CREAMY, "#86b84c"], n: 0.1 },
  { p: [[600, 300], [620, 300], [620, 350], [612, 385], [606, 350]], c: LEAFY, n: 0.16 },
  { p: [[598, 343], [605, 343], [605, 357], [612, 364], [604, 366]], c: DEEP, n: 0.9 },
  { p: [[628, 411], [640, 421], [649, 432], [651, 452], [642, 450], [628, 446], [614, 452], [612, 462], [598, 462], [598, 445], [614, 440], [617, 428]], c: DEEP, n: 0.88, s: 4 },
  { p: [[598, 443], [612, 443], [610, 458], [598, 458]], c: BROWN, n: 0.8 },
  { p: [[690, 457], [698, 458], [700, 480], [692, 478]], c: ["#f0d030", ...LIME], n: 0.5 },
  { p: [[683, 495], [707, 492], [715, 515], [722, 540], [700, 548], [690, 520]], c: [...LIME, ...GOLDS, ...LEAFY], n: 0.42 },
  { p: [[705, 520], [721, 518], [721, 536], [706, 534]], c: ["#f8a814", "#f8c018", "#e8b020"], n: 0.75 },
  { p: [[684, 533], [695, 533], [698, 552], [690, 558], [684, 550]], c: DEEP, n: 1, s: 4 },
  { p: [[692, 575], [706, 575], [706, 592], [698, 602], [694, 590]], c: DEEP, n: 0.9, s: 4 },
  { p: [[700, 555], [710, 560], [710, 580], [703, 582]], c: GOLDS, n: 0.8 },
  { p: [[706, 545], [745, 550], [745, 600], [708, 600]], c: [...ORANGE, ...LIME], n: 0.26 },
  { p: [[722, 515], [742, 520], [742, 560], [720, 560]], c: ORANGE, n: 0.28 },
  { p: [[742, 580], [790, 595], [788, 612], [750, 640], [735, 610]], c: [...ORANGE, ...LEAFY, ...LIME], n: 0.28 },
  { p: [[728, 588], [752, 590], [750, 606], [730, 604]], c: ORANGE, n: 0.55 },
  { p: [[768, 597], [786, 597], [782, 604], [768, 604]], c: ["#f78e18", "#f8682c"], n: 0.6 },
  { p: [[700, 600], [715, 592], [728, 600], [745, 640], [750, 650], [740, 660], [704, 648]], c: [...GOLDS, ...LIME, "#86b800"], n: 0.62 },
  { p: [[700, 600], [714, 596], [714, 616], [703, 618]], c: ["#d8e428", "#c0dc20"], n: 0.9, s: 4 },
  { p: [[727, 612], [738, 600], [746, 630], [744, 642], [732, 640]], c: ["#f8b810", "#f8c808", "#fca810"], n: 0.75, s: 4 },
  { p: [[722, 630], [734, 632], [734, 645], [724, 645]], c: ["#e4dc28", "#dcd030"], n: 0.9 },
  { p: [[750, 610], [800, 605], [808, 640], [790, 670], [770, 670], [740, 665], [748, 640]], c: [...LEAFY, "#a4c818"], n: 0.34 },
  { p: [[752, 620], [768, 615], [760, 670], [748, 665]], c: ["#8fb800", "#7fae08", "#c8c808"], n: 0.45 },
  { p: [[798, 620], [806, 620], [806, 638], [797, 636]], c: DEEP, n: 0.8 },
  { p: [[758, 664], [770, 666], [778, 692], [768, 686]], c: DEEP, n: 0.75 },
  { p: [[704, 645], [745, 655], [738, 662], [712, 654]], c: LEAFY, n: 0.4 },
  { p: [[806, 510], [824, 506], [820, 545], [812, 548], [813, 580], [806, 582], [796, 568], [796, 552], [802, 538]], c: ["#3f9a2c", ...LEAFY], n: 0.34 },
  { p: [[722, 481], [728, 481], [727, 492], [724, 500], [719, 499]], c: ["#f8501c", "#f56828"], n: 1 },
  { p: [[731, 486], [735, 488], [740, 498], [731, 498]], c: ["#a84c24"], n: 1 },
];

/* thick cell strokes: the built-up cells with the highest counts */
const HOT: { p: Pt[]; c: string }[] = [
  { p: [[723, 504], [729, 505], [735, 507], [736, 500]], c: "#f23c14" },
  { p: [[742, 501], [743, 497], [746, 491]], c: "#e8401c" },
  { p: [[746, 473], [750, 474], [753, 478], [757, 479], [754, 483]], c: "#f83c08" },
];

function line(g: Cells, a: Pt, b: Pt, w: number, c: string[]) {
  const n = Math.max(1, Math.ceil(Math.hypot(b[0] - a[0], b[1] - a[1]) / 1.500));
  for (let i = 0; i <= n; i++) {
    const x = a[0] + ((b[0] - a[0]) * i) / n + (rnd() - 0.5);
    const y = a[1] + ((b[1] - a[1]) * i) / n + (rnd() - 0.5);
    if (w <= 2) {
      if (rnd() < 0.9) g.set(x, y, c[Math.floor(rnd() * c.length)], w === 2 ? 2 : 1);
      if (rnd() < 0.08) g.set(x + 2, y, "#b8cfbf", 2);
    } else
      for (let u = -w / 2; u < w / 2; u += 2)
        for (let v = -w / 2; v < w / 2; v += 2) if (rnd() < 0.65) g.set(x + u, y + v, rnd() < 0.85 ? c[Math.floor(i / 3) % c.length] : pick(c), 2);
  }
}

function creek(g: Cells, x: number, y: number, dir: number, len: number, c: string[]) {
  let px = x;
  let py = y;
  let d = dir;
  for (let i = 0; i < len; i++) {
    d += (rnd() - 0.5) * 0.9;
    const nx = px + Math.cos(d) * 4;
    const ny = py + Math.sin(d) * 4;
    if (inside(SEA, nx, ny)) return;
    line(g, [px, py], [nx, ny], rnd() < 0.35 ? 2 : 1, rnd() < 0.7 ? [c[i % c.length]] : c);
    if (rnd() < 0.13 && len > 3) creek(g, nx, ny, d + (rnd() < 0.5 ? 1 : -1), Math.floor(len / 2), c);
    px = nx;
    py = ny;
  }
}

const ramp = (t: number, stops: string[]) => stops[Math.max(0, Math.min(stops.length - 1, Math.floor(t * stops.length)))];
const PALE = ["", "", "#ccd1df", "#cbd3e2", "#cbd5e5", "#cdd8e8", "#cedbeb", "#d0deec", "#d2e1ee"];
const DARK = ["", "", "#53658f", "#536893", "#556e9c", "#5876a8", "#5b80b5", "#608abf"];

function buildMap() {
  seed = 7;
  const land = new Cells(3);
  for (let j = 0; j < land.h; j++)
    for (let i = 0; i < land.w; i++) {
      const x = OX + i * 3 + 1.500;
      const y = OY + j * 3 + 1.500;
      let c = "";
      if (inside(SEA, x, y)) c = "#ffffff";
      else if (inside(CREAM, x, y)) c = pick(["#eff6ee", "#f2f8ef"]);
      else if (inside(AQUA, x, y)) c = pick(["#d5e8f0", "#d7ebf2", "#d2e4f0"]);
      else if (y >= 699 && x > 660) c = ramp((x - 670) / 75 + (rnd() - 0.5) * 0.2, DARK);
      else if (y > 410 && y < 699 && x > 560) {
        const edge = y < 500 ? 615 : y < 620 ? 660 : 655;
        c = ramp((x - edge) / 80 + (rnd() - 0.5) * 0.12, PALE);
      } else if (y > 300 && y <= 410 && x > 585 && x < 635) c = ramp(0.5 + rnd() * 0.1, PALE);
      if (c) land.d[j * land.w + i] = c;
    }
  const isles: [number, number, number, number][] = [[656, 181, 6, 6], [654, 184, 6, 3], [640, 299, 3, 9]];
  for (const [x, y, w, h] of isles) for (let a = 0; a < w; a += 3) for (let b = 0; b < h; b += 3) land.set(x + a, y + b, "#cdd0de");
  for (const [x, y] of [[697, 123], [700, 123], [877, 573], [877, 576], [880, 576]] as Pt[]) land.set(x, y, "#53628c");

  const g = new Cells(1);
  for (const r of RIVERS) {
    for (let i = 1; i < r.p.length; i++) {
      const [a, b] = [r.p[i - 1], r.p[i]];
      const n = Math.ceil(Math.hypot(b[0] - a[0], b[1] - a[1]) / 4);
      const base = Math.atan2(b[1] - a[1], b[0] - a[0]);
      const c = r.c === LEAFY || r.c === DEEP || r.c === LIME ? [...LEAFY, "#d8e8a0"] : CREAMY;
      for (let k = 0; k < n; k++)
        if (rnd() < r.b) {
          const t = k / n;
          creek(g, a[0] + (b[0] - a[0]) * t, a[1] + (b[1] - a[1]) * t, base + (rnd() < 0.5 ? 1.200 : -1.200), 3 + Math.floor(rnd() * 4), c);
        }
    }
  }
  for (const r of RIVERS) for (let i = 1; i < r.p.length; i++) line(g, r.p[i - 1], r.p[i], r.w, r.c);
  for (const q of PATCHES) {
    const xs = q.p.map((p) => p[0]);
    const ys = q.p.map((p) => p[1]);
    const s = q.s || 3;
    for (let y = Math.min(...ys); y <= Math.max(...ys); y += s)
      for (let x = Math.min(...xs); x <= Math.max(...xs); x += s) {
        if (!inside(q.p, x, y) || rnd() > q.n) continue;
        g.set(x, y, pick(q.c), s);
        if (q.n < 0.7 && rnd() < 0.35) g.set(x + s, y + Math.floor(rnd() * 3), "#f4f4c4", rnd() < 0.5 ? 1 : 2);
      }
  }
  line(g, [612, 444], [626, 441], 3, ["#8a7a18", "#7f7a10"]);
  line(g, [626, 441], [644, 441], 3, ["#6f7f08", "#7f7a10"]);
  for (const h of HOT)
    for (let i = 1; i < h.p.length; i++) {
      const [a, b] = [h.p[i - 1], h.p[i]];
      for (let t = 0; t <= 1; t += 0.25) g.set(a[0] + (b[0] - a[0]) * t, a[1] + (b[1] - a[1]) * t, h.c, 3);
    }
  for (let j = 0; j < g.h; j++) for (let i = 0; i < g.w; i++) if (g.d[j * g.w + i] && inside(SEA, OX + i, OY + j)) g.d[j * g.w + i] = null;
  return [...land.paths(), ...g.paths()];
}

const MAP = buildMap();

function MapCanvas() {
  return (
    <main className="flex min-w-0 flex-1 overflow-hidden border border-[#b6b3b0] bg-[#53628c]">
      <svg viewBox="348 122 567 591" preserveAspectRatio="xMidYMid slice" shapeRendering="crispEdges" className="h-full w-full" role="img" aria-label="Map canvas">
        <rect x="437" y="135" width="389" height="564" fill="#cdd0de" />
        {MAP.map(([c, d], i) => (
          <path key={i} d={d} fill={c} />
        ))}
      </svg>
    </main>
  );
}

/* ------------------------------------------------------------------ */
/* Results dock                                                        */
/* ------------------------------------------------------------------ */

function PushButton({ children, wide = false }: { children: Node; wide?: boolean }) {
  return (
    <button
      type="button"
      className={"h-[25px] rounded border border-[#a09e9b] bg-gradient-to-b from-[#ececec] to-[#d2d2d2] text-sm leading-none text-[#4c4c4c] " + (wide ? "w-full" : "w-[84px]")}
    >
      {children}
    </button>
  );
}

function Result({ name, value, bold = false, shade = false }: { name: string; value: string; bold?: boolean; shade?: boolean }) {
  return (
    <tr className={"border-t border-[#ddd] " + (shade ? "bg-[#f9f9f9] " : "") + (bold ? "font-bold" : "")}>
      <td className="p-2">{name}</td>
      <td className="p-2">{value}</td>
    </tr>
  );
}

function WebView() {
  return (
    <div className="flex min-h-0 flex-1 pt-[7px]">
      <div className="flex min-w-0 flex-1 flex-col">
        <div className="min-h-0 flex-1 overflow-hidden bg-white pl-[5px] pr-[15px]">
          <div className="flex h-[51px] items-start pl-[2px] font-['DejaVu_Sans',sans-serif]">
            <svg width="19" height="33" viewBox="0 0 14 24" preserveAspectRatio="none" fill="none" className="mt-1 shrink-0" aria-hidden="true">
              <Leaf />
            </svg>
            <h1 className="pl-[2px] text-[38px] leading-10 text-black">
              Ina<b>SAFE</b>
            </h1>
          </div>
          <h2 className="mb-[10px] h-[15px] bg-gradient-to-b from-[#0088cc] to-[#0055cc] pl-1 font-['DejaVu_Sans',sans-serif] text-sm leading-[15px] text-white">Analysis Results</h2>
          <table className="w-full table-fixed border-collapse font-['DejaVu_Sans',sans-serif] text-xs leading-[17px] text-[#333]">
            <colgroup>
              <col />
              <col className="w-20" />
            </colgroup>
            <tbody>
              <tr className="border-t border-[#ddd] bg-[#f9f9f9]">
                <td colSpan={2} className="p-2">
                  In the event of <i>tacloban flood hazard (100yr)</i> how many <i>leyte population 2010</i> might <i>be affected by each hazard category</i>
                </td>
              </tr>
              <Result name="Total Population Affected" value="75,200" bold />
              <Result name="Population in High risk areas" value="47,400" shade />
              <Result name="Population in Medium risk areas" value="24,800" />
              <Result name="Population in Low risk areas" value="3,100" shade />
              <Result name="Population Not Affected" value="190,000" />
              <tr className="border-t border-[#ddd] bg-[#f9f9f9]">
                <td colSpan={2} className="p-2">Table below shows the minimum needs for all evacuated people</td>
              </tr>
              <Result name="Needs should be provided daily" value="Total" bold />
              <Result name="Family Food pack** [pc.]" value="15,040" shade />
            </tbody>
          </table>
        </div>
        <div className="flex h-[13px] shrink-0 items-center rounded-full border border-[#b0aeab] bg-[#dad9d7]">
          <span className="flex h-full w-3 items-center justify-center rounded-l-full bg-[#f2f1f0]">
            <svg width="4" height="5" viewBox="0 0 4 5"><path d="M4 0v5L0 2.500z" fill="#aaa" /></svg>
          </span>
          <span className="flex h-full w-[146px] items-center justify-center gap-[2px] rounded-full border border-[#a5a3a0] bg-[#f4f3f2]">
            <i className="h-1 w-px bg-[#999]" />
            <i className="h-1 w-px bg-[#999]" />
            <i className="h-1 w-px bg-[#999]" />
          </span>
          <span className="ml-auto flex h-full w-3 items-center justify-center rounded-r-full bg-[#f2f1f0]">
            <svg width="4" height="6" viewBox="0 0 4 6"><path d="M0 0v6l4-3z" fill="#666" /></svg>
          </span>
        </div>
      </div>
      <div className="mb-[13px] flex w-[13px] shrink-0 flex-col items-center rounded-full border border-[#b0aeab] bg-[#dad9d7]">
        <span className="flex h-3 w-full items-center justify-center rounded-t-full bg-[#f2f1f0]">
          <svg width="5" height="4" viewBox="0 0 5 4"><path d="M0 4h5L2.500 0z" fill="#aaa" /></svg>
        </span>
        <span className="flex h-[70px] w-full flex-col items-center justify-center gap-[2px] rounded-full border border-[#a5a3a0] bg-[#f4f3f2]">
          <i className="h-px w-1 bg-[#999]" />
          <i className="h-px w-1 bg-[#999]" />
          <i className="h-px w-1 bg-[#999]" />
        </span>
        <span className="mt-auto flex h-[14px] w-full items-center justify-center rounded-b-full bg-[#f2f1f0]">
          <svg width="6" height="4" viewBox="0 0 6 4"><path d="M0 0h6L3 4z" fill="#666" /></svg>
        </span>
      </div>
    </div>
  );
}

function Supporters() {
  return (
    <div className="mt-[6px] flex h-16 shrink-0 justify-between bg-white">
      <div className="flex w-[58px] flex-col items-center">
        <svg width="56" height="51" viewBox="0 0 56 51" aria-hidden="true">
          <defs>
            <path id="arcTop" d="M6.500 30A22.500 21.500 0 1 1 49.500 30" />
            <path id="arcBottom" d="M3 26A25 23.500 0 0 0 53 26" />
          </defs>
          <ellipse cx="28" cy="25.500" rx="27.300" ry="25" fill="#fff" stroke="#999" strokeWidth=".7" />
          <path d="M2 25A26 24.500 0 0 1 54 25z" fill="#d9252a" />
          <ellipse cx="28" cy="25.500" rx="20" ry="18.500" fill="#f08300" stroke="#fff" />
          <path d="M28 7l16 28H12z" fill="#0a50a1" />
          <text fontSize="5" fontWeight="700" fill="#fff" fontFamily='"Liberation Sans", sans-serif'>
            <textPath href="#arcTop" startOffset="16">BADAN NASIONAL</textPath>
          </text>
          <text fontSize="4" fontWeight="700" fill="#d9252a" fontFamily='"Liberation Sans", sans-serif'>
            <textPath href="#arcBottom" startOffset="8">PENANGGULANGAN BENCANA</textPath>
          </text>
        </svg>
        <span className="flex w-full justify-between px-px font-['Liberation_Sans',sans-serif] text-base font-bold leading-[14px] text-[#0a50a1]">
          <b>B</b>
          <b>N</b>
          <b>P</b>
          <b>B</b>
        </span>
      </div>
      <div className="relative w-[118px] font-['Liberation_Sans',sans-serif] text-2xl font-bold leading-5 text-[#1f2d5c]">
        <div className="leading-[18px]">Australian</div>
        <div>Aid</div>
        <svg width="56" height="29" viewBox="0 0 56 29" className="absolute left-11 top-[19px]" aria-hidden="true">
          <path d="M0 10c6 4 13 2 19-4C25 1 33 0 38 4c4 2 6 1 8-1l1-2 1 2c3 1 5 3 7 6-3 0-5 1-7 1-3 3-6 3-8 3l3 5-2 1-3-6c-3 0-4 1-5 3l-3 6 15 6v1L28 25l3-9c-2-1-5-1-8 0-6 1-13 1-23-6z" fill="#e4002b" />
        </svg>
      </div>
      <div className="flex w-[62px] flex-col items-center">
        <svg width="45" height="40" viewBox="0 0 45 40" fill="none" aria-hidden="true">
          <rect width="45" height="40" fill="#000" />
          <g stroke="#fff" strokeWidth="1.600">
            <circle cx="22.500" cy="20" r="17.500" strokeWidth="2" />
            <ellipse cx="22.500" cy="20" rx="9" ry="17.500" />
            <path d="M22.500 2.500v35M5 20h35M8 11c9 3 20 3 29 0M8 29c9-3 20-3 29 0" />
          </g>
        </svg>
        <span className="whitespace-nowrap font-['Liberation_Sans',sans-serif] text-[7px] font-bold leading-3 text-black">THE WORLD BANK</span>
      </div>
      <div className="flex w-[152px] flex-col justify-between">
        <div className="flex items-start gap-1">
          <svg width="32" height="26" viewBox="0 0 32 26" fill="none" className="shrink-0" aria-hidden="true">
            <circle cx="15" cy="13" r="12" fill="#e9f0e0" stroke="#4d9bc4" strokeWidth="1.600" />
            <g stroke="#9bb04a" strokeWidth="1.200">
              <ellipse cx="16" cy="13" rx="5" ry="10" />
              <path d="M6 10c6 3 12 2 19-1M6 16c7 2 12 2 19-1M9 6c4 3 9 2 13 0M9 21c4-2 9-2 13 0" />
            </g>
            <path d="M31.500 0v26" stroke="#cfe0e8" />
          </svg>
          <span className="font-['Open_Sans',sans-serif] text-[34px] font-bold leading-[25px] text-black">GFDRR</span>
        </div>
        <a href="#supporters" className="whitespace-nowrap text-right font-['DejaVu_Sans_Mono',monospace] text-xs font-bold leading-3 text-[#f4733a]">
          InaSAFE Supporters
        </a>
      </div>
    </div>
  );
}

function ResultsDock() {
  return (
    <aside className="flex w-[393px] shrink-0 flex-col text-[#3c3c3c]">
      <div className="pl-[2px] pr-[3px]">
        <DockTitle title="InaSAFE 2.2.0b0 final" />
      </div>
      <div className="px-px pt-px">
        <PushButton wide>Show question form</PushButton>
      </div>
      <WebView />
      <Supporters />
      <div className="flex justify-between px-px pb-px pt-[7px]">
        <PushButton>Help</PushButton>
        <PushButton>About</PushButton>
        <PushButton>Print ...</PushButton>
        <PushButton>Run</PushButton>
      </div>
    </aside>
  );
}

function StatusBar() {
  return (
    <footer className="flex h-[30px] shrink-0 items-center justify-end border-t border-[#d6d4d2] pb-[2px] pr-[3px] text-sm text-[#3c3c3c]">
      <button type="button" aria-label="Toggle extents" className="mr-[10px]">
        <svg width="18" height="18" viewBox="0 0 18 18" fill="none" className="block">
          <rect x=".5" y=".5" width="17" height="17" rx="2" fill="#ddd" stroke="#bbb" />
          <path d="M3 4l5 6 7-7M2 9l6 4 8-8" stroke="#222" strokeWidth="1.300" />
          <ellipse cx="6" cy="5" rx="3" ry="3.500" stroke="#222" strokeWidth="1.500" />
          <ellipse cx="11" cy="12" rx="4" ry="3" stroke="#222" strokeWidth="1.500" />
        </svg>
      </button>
      <label htmlFor="coord" className="mr-[11px]">Coordinate:</label>
      <input id="coord" defaultValue="125.0552,11.2450" className="mr-[11px] h-[18px] w-[298px] rounded border border-[#a5a29f] bg-white text-center text-sm leading-none" />
      <label htmlFor="scale" className="mr-[15px]">Scale</label>
      <span className="relative mr-[10px] flex">
        <select id="scale" className="h-[18px] w-[98px] appearance-none rounded border border-[#a5a29f] bg-white pl-px text-sm leading-none">
          <option>1:115.525</option>
        </select>
        <span className="pointer-events-none absolute right-px top-px flex h-4 w-6 items-center justify-center rounded-r border-l border-[#c0bebb] bg-[#ededec]">
          <svg width="8" height="5" viewBox="0 0 8 5"><path d="M0 0h8L4 5z" fill="#777" /></svg>
        </span>
      </span>
      <Check id="render" checked />
      <label htmlFor="render" className="ml-2 mr-[17px]">Render</label>
      <span className="mr-[11px] text-[#a5a3a0]">EPSG:4326</span>
      <button type="button" aria-label="Projection" className="mr-2">
        <svg width="18" height="18" viewBox="0 0 18 18" fill="none" className="block" stroke="#666">
          <rect x=".5" y=".5" width="17" height="17" rx="3" fill="#ccc" stroke="#999" />
          <circle cx="9" cy="9" r="6" fill="#aaa" strokeWidth="1.500" />
          <path d="M3 9h12M9 3v12M5 5h8M5 13h8" />
        </svg>
      </button>
      <button type="button" aria-label="Messages">
        <svg width="18" height="18" viewBox="0 0 18 18" fill="none" className="block">
          <rect x=".5" y=".5" width="17" height="17" rx="3" fill="#e6e5e3" stroke="#999" />
          <path d="M9 3l6 12H3z" fill="#f8f5c0" stroke="#777" />
          <path d="M9 7v4M9 12.500v1.500" stroke="#222" strokeWidth="1.600" />
        </svg>
      </button>
    </footer>
  );
}

export default function App() {
  return (
    <div className="flex h-screen min-h-[600px] flex-col overflow-hidden bg-[#f2f1f0] font-['Noto_Sans',sans-serif]">
      <Toolbars />
      <div className="flex min-h-0 flex-1">
        <SideBar />
        <LayersDock />
        <div className="flex w-[6px] shrink-0 items-center">
          <Grip />
        </div>
        <MapCanvas />
        <div className="flex w-[6px] shrink-0 items-center">
          <Grip />
        </div>
        <ResultsDock />
      </div>
      <StatusBar />
    </div>
  );
}
